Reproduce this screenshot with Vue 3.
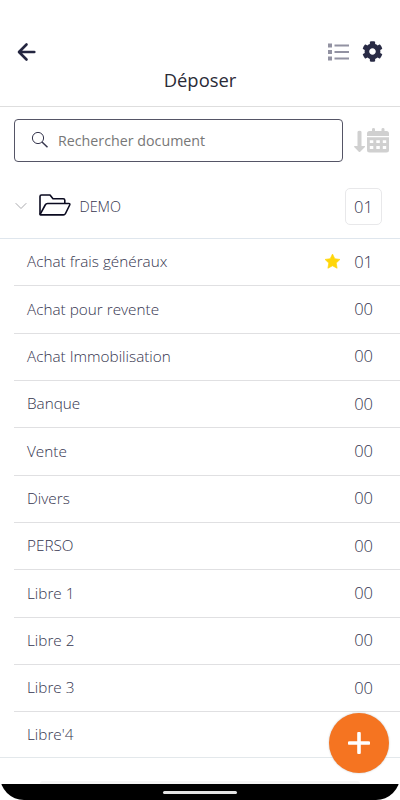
<script setup>
import { ref } from 'vue'

const search = ref('')
const open = ref(true)
const folders = ref([
  { name: 'Achat frais généraux', count: '01', favorite: true },
  { name: 'Achat pour revente', count: '00' },
  { name: 'Achat Immobilisation', count: '00' },
  { name: 'Banque', count: '00' },
  { name: 'Vente', count: '00' },
  { name: 'Divers', count: '00' },
  { name: 'PERSO', count: '00' },
  { name: 'Libre 1', count: '00' },
  { name: 'Libre 2', count: '00' },
  { name: 'Libre 3', count: '00' },
  { name: "Libre'4", count: '' }
])
</script>
<template>
  <div class="screen">
    <header class="header">
      <div class="toolbar">
        <svg class="back-icon" viewBox="0 0 20 20">
          <path d="M10 2.500 2.500 10l7.500 7.500M3 10h14.800" />
        </svg>
        <div class="toolbar-actions">
          <svg class="list-icon" viewBox="0 0 22 18">
            <path d="M1 .5h4v4H1zM1 7h4v4H1zM1 13.500h4v4H1zM7.500 1.500H22v2H7.500zM7.500 8H22v2H7.500zM7.500 14.500H22v2H7.500z" />
          </svg>
          <svg class="gear-icon" viewBox="0 0 512 512">
            <path
              d="M487.4 315.7l-42.6-24.6c4.3-23.2 4.3-47 0-70.2l42.6-24.6c4.9-2.8 7.1-8.6 5.5-14-11.1-35.6-30-67.8-54.7-94.6-3.8-4.1-10-5.1-14.8-2.3L380.8 110c-17.9-15.4-38.5-27.3-60.8-35.1V25.800c0-5.600-3.900-10.500-9.400-11.700-36.700-8.200-74.300-7.800-109.200 0-5.500 1.200-9.400 6.100-9.400 11.700V75c-22.200 7.900-42.800 19.800-60.800 35.100L88.700 85.500c-4.900-2.800-11-1.900-14.800 2.300-24.700 26.700-43.600 58.900-54.700 94.600-1.700 5.400.6 11.200 5.500 14L67.300 221c-4.300 23.200-4.300 47 0 70.200l-42.6 24.600c-4.900 2.800-7.100 8.600-5.500 14 11.100 35.600 30 67.800 54.700 94.600 3.800 4.100 10 5.100 14.800 2.300l42.600-24.600c17.900 15.400 38.500 27.300 60.800 35.100v49.200c0 5.600 3.900 10.500 9.400 11.700 36.700 8.200 74.300 7.800 109.200 0 5.500-1.200 9.400-6.100 9.400-11.700v-49.200c22.200-7.900 42.800-19.800 60.800-35.100l42.600 24.600c4.900 2.800 11 1.900 14.800-2.300 24.700-26.700 43.600-58.900 54.700-94.600 1.500-5.500-.7-11.300-5.600-14.100zM256 336c-44.100 0-80-35.900-80-80s35.900-80 80-80 80 35.900 80 80-35.900 80-80 80z"
            />
          </svg>
        </div>
      </div>
      <h1 class="title">Déposer</h1>
    </header>

    <div class="search-row">
      <label class="search-box">
        <svg class="search-icon" viewBox="0 0 18 18">
          <circle cx="7" cy="7" r="5.6" />
          <path class="handle" d="m11 11 5.500 5.200" />
        </svg>
        <input v-model="search" class="search-input" placeholder="Rechercher document" />
      </label>
      <svg class="sort-icon" viewBox="0 0 36 26">
        <path d="M3.500 4q0-1.300 2-1.300t2 1.300V18h3.200q.8.500 0 1.300l-4.500 4.500q-.7.600-1.400 0L.4 19.300q-.7-.8.2-1.300H3.500z" />
        <path
          fill-rule="evenodd"
          d="M13 8V5.500Q13 3 15.500 3H18V1.300q0-1.300 1.500-1.300T21 1.300V3h6.500V1.300q0-1.300 1.500-1.300t1.500 1.300V3h2Q35 3 35 5.500V8zM13 9.200H35V22q0 2.500-2.500 2.500h-17Q13 24.500 13 22zM15.800 12.300v2.800h3.500v-2.800zm6.500 0v2.800h3.500v-2.800zm6.500 0v2.800h3.400v-2.800zM15.800 18v2.900h3.500V18zm6.500 0v2.900h3.500V18zm6.500 0v2.900h3.400V18z"
        />
      </svg>
    </div>

    <div class="folder-row" @click="open = !open">
      <svg class="chevron" viewBox="0 0 12 8"><path d="m.7 1.200 5.300 5.300 5.300-5.300" /></svg>
      <svg class="folder-icon" viewBox="0 0 34 24">
        <path d="M2 21V3.500Q2 2 3.500 2H12l3 3.700h10.200q1.600 0 1.600 1.600v3.200" />
        <path d="m2 21.700 5.200-9.700q.8-1.500 2.400-1.500h21.200q1.500 0 .9 1.500L27.500 20.500q-.7 1.400-2.200 1.400H2.600Q1.700 21.900 2 21" />
      </svg>
      <span class="folder-name">DEMO</span>
      <span class="folder-count">01</span>
    </div>

    <ul v-if="open" class="items">
      <li v-for="folder in folders" :key="folder.name" class="item">
        <span class="item-name">{{ folder.name }}</span>
        <svg v-if="folder.favorite" class="star" viewBox="0 0 24 24">
          <path
            d="m12 1.500 3.200 6.600 7.300 1-5.300 5.100 1.300 7.300L12 18l-6.500 3.500 1.300-7.300L1.500 9.100l7.300-1z"
          />
        </svg>
        <span class="item-count">{{ folder.count }}</span>
      </li>
    </ul>

    <button class="add-button" aria-label="Ajouter">
      <svg viewBox="0 0 22 22"><path d="M11 1.500v19M1.500 11h19" /></svg>
    </button>

    <div class="next-card"></div>
    <div class="nav-bar">
      <div class="nav-surface"><span class="nav-handle"></span></div>
    </div>
  </div>
</template>
<style>
body {
  margin: 0;
  background: #fff;
}
</style>
<style scoped>
.screen {
  position: relative;
  width: 400px;
  height: 800px;
  box-sizing: border-box;
  overflow: hidden;
  background: #fff;
  color: #34344e;
  font-family: 'Open Sans', 'Noto Sans', sans-serif;
  font-weight: 300;
}
svg {
  display: block;
  flex: none;
}
.header {
  height: 107px;
  box-sizing: border-box;
  padding-top: 40px;
  border-bottom: 1px solid #dedede;
}
.toolbar {
  display: flex;
  align-items: center;
  justify-content: space-between;
  height: 23px;
  padding: 0 17px 0 16px;
}
.back-icon {
  width: 21px;
  height: 20px;
  fill: none;
  stroke: #242640;
  stroke-width: 2.6;
  stroke-linecap: round;
  stroke-linejoin: round;
}
.toolbar-actions {
  display: flex;
  align-items: center;
  gap: 13px;
}
.list-icon {
  width: 22px;
  height: 18px;
  fill: #9292a2;
}
.gear-icon {
  width: 21px;
  height: 21px;
  fill: #292b45;
}
.title {
  margin: 5px 0 0;
  font-size: 18.400px;
  line-height: 24px;
  font-weight: 400;
  text-align: center;
  color: #2a2a36;
}
.search-row {
  display: flex;
  align-items: center;
  gap: 11px;
  padding: 12px 10px 0 14px;
}
.search-box {
  display: flex;
  align-items: center;
  width: 329px;
  height: 43px;
  box-sizing: border-box;
  padding: 0 16px;
  gap: 9px;
  border: 1px solid #555566;
  border-radius: 4px;
}
.search-icon {
  width: 18px;
  height: 18px;
  margin-top: -1px;
  fill: none;
  stroke: #35354d;
  stroke-width: 1;
}
.search-icon .handle {
  stroke-width: 1.5;
}
.search-input {
  flex: 1;
  min-width: 0;
  padding: 0;
  border: 0;
  outline: 0;
  background: none;
  font: 400 14.250px 'Open Sans', sans-serif;
}
.search-input::placeholder {
  color: #777;
  opacity: 1;
}
.sort-icon {
  width: 36px;
  height: 26px;
  fill: #d0d0d0;
}
.folder-row {
  display: flex;
  align-items: center;
  height: 77px;
  box-sizing: border-box;
  padding: 12px 18px 0 15px;
  border-bottom: 1px solid #dfe6ed;
}
.chevron {
  width: 12px;
  height: 8px;
  fill: none;
  stroke: #a9a9ad;
}
.folder-icon {
  width: 34px;
  height: 24px;
  margin: -3px 8px 0 10.500px;
  fill: none;
  stroke: #0b0b20;
  stroke-width: 1.6;
  stroke-linejoin: round;
}
.folder-name {
  flex: 1;
  font-size: 14.400px;
}
.folder-count {
  width: 37px;
  height: 37px;
  box-sizing: border-box;
  border: 1px solid #e8e8ea;
  border-radius: 5px;
  font-size: 16.500px;
  line-height: 36px;
  text-align: center;
}
.items {
  margin: 0;
  padding: 0;
  list-style: none;
}
.item {
  display: flex;
  align-items: center;
  height: 47.350px;
  box-sizing: border-box;
  margin-left: 14px;
  padding: 0 27px 2px 13px;
  border-bottom: 1px solid #e0e0e2;
}
.item:last-child {
  height: 46px;
  margin-left: 0;
  padding-left: 27px;
  padding-bottom: 1px;
  border-color: #e3e8eb;
}
.item-name {
  flex: 1;
  font-size: 15.300px;
}
.star {
  width: 17px;
  height: 17px;
  margin-right: 13px;
  fill: #ffd60a;
  stroke: #ffd60a;
  stroke-linejoin: round;
}
.item-count {
  font-size: 16.500px;
}
.add-button {
  position: absolute;
  right: 11px;
  bottom: 27px;
  display: flex;
  align-items: center;
  justify-content: center;
  width: 60px;
  height: 60px;
  padding: 0;
  border: 0;
  border-radius: 50%;
  background: #f57421;
  box-shadow: 0 0 2px rgba(0, 0, 0, 0.25);
}
.add-button svg {
  width: 22px;
  height: 22px;
  fill: none;
  stroke: #fff;
  stroke-width: 3.6;
  stroke-linecap: round;
}
.next-card {
  position: absolute;
  left: 40px;
  right: 40px;
  bottom: 16px;
  height: 3px;
  border-radius: 3px 3px 0 0;
  background: #f5f5f5;
}
/* phone gesture bar, cut by the rounded screen corners */
.nav-bar {
  position: absolute;
  left: 0;
  right: 0;
  bottom: 0;
  height: 16px;
  overflow: hidden;
}
.nav-surface {
  display: flex;
  justify-content: center;
  align-items: flex-end;
  height: 40px;
  margin-top: -24px;
  box-sizing: border-box;
  padding-bottom: 6px;
  border-radius: 0 0 24px 24px;
  background: #000;
}
.nav-handle {
  width: 74px;
  height: 3px;
  border-radius: 2px;
  background: #e4e4e4;
}
</style>
